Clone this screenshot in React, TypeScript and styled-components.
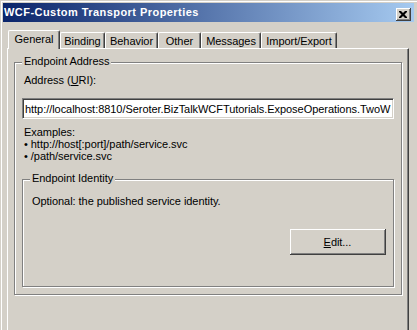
import React from "react";
import styled, { createGlobalStyle } from "styled-components";

const GlobalStyle = createGlobalStyle`
  html, body {
    margin: 0;
    padding: 0;
    background: #d4d0c8;
  }
  body {
    font-family: "Liberation Sans", Arial, sans-serif;
    font-size: 11px;
    letter-spacing: -0.05px;
    color: #000;
  }
  *, *::before, *::after { box-sizing: border-box; }
`;

const Window = styled.div`
  width: 417px;
  height: 330px;
  overflow: hidden;
  background: #d4d0c8;
  box-shadow: inset 1px 1px 0 #d4d0c8, inset 2px 2px 0 #ffffff;
  display: flex;
  flex-direction: column;
  padding-top: 3px;
`;

const TitleBar = styled.div`
  flex: none;
  margin: 0 3px;
  height: 19px;
  display: flex;
  align-items: flex-end;
  justify-content: space-between;
  padding: 0 3px 1px 1px;
  background: linear-gradient(to right, #0a246a, #a6caf0);
`;

const Title = styled.span`
  align-self: center;
  color: #fff;
  font-weight: bold;
  font-size: 11px;
  letter-spacing: 0.45px;
  white-space: nowrap;
`;

const CloseButton = styled.div`
  width: 15px;
  height: 13px;
  background: #d4d0c8;
  box-shadow: inset -1px -1px 0 #404040, inset 1px 1px 0 #ffffff,
    inset -2px -2px 0 #808080;
  display: flex;
  align-items: center;
  justify-content: center;
  padding: 0 1px 1px 0;
`;

const TabStrip = styled.div`
  flex: none;
  display: flex;
  align-items: flex-end;
  height: 18px;
  margin-top: 8px;
  padding-left: 8px;
`;

const Tab = styled.div<{ $active?: boolean; $w: number }>`
  position: relative;
  z-index: ${(p) => (p.$active ? 1 : 0)};
  width: ${(p) => p.$w}px;
  height: ${(p) => (p.$active ? 19 : 16)}px;
  margin-bottom: ${(p) => (p.$active ? -1 : 0)}px;
  background: #d4d0c8;
  border-top: 1px solid #ffffff;
  border-left: 1px solid #ffffff;
  border-right: 1px solid #404040;
  box-shadow: inset -1px 0 0 #808080;
  border-radius: 2px 2px 0 0;
  padding-top: 2px;
  line-height: 13px;
  text-align: center;
  white-space: nowrap;
`;

const Panel = styled.div`
  flex: 1;
  margin-left: 7px;
  width: 402px;
  border-top: 1px solid #ffffff;
  border-left: 1px solid #ffffff;
  border-right: 1px solid #404040;
  box-shadow: inset -1px 0 0 #808080;
  padding: 13px 6px 0 6px;
  display: flex;
  flex-direction: column;
`;

const Group = styled.div`
  position: relative;
  border: 1px solid #808080;
  box-shadow: 1px 1px 0 #ffffff, inset 1px 1px 0 #ffffff;
  display: flex;
  flex-direction: column;
`;

const AddressGroup = styled(Group)`
  padding: 11px 7px 7px 7px;
`;

const IdentityGroup = styled(Group)`
  margin-top: 17px;
  padding: 15px 7px 31px 7px;
`;

const GroupTitle = styled.span`
  position: absolute;
  top: -8px;
  left: 7px;
  padding: 0 2px;
  background: #d4d0c8;
  line-height: 13px;
  white-space: nowrap;
`;

const Label = styled.div`
  line-height: 13px;
  padding-left: 2px;
  white-space: nowrap;
`;

const AddressInput = styled.input`
  margin-top: 11px;
  height: 21px;
  width: 100%;
  background: #ffffff;
  border: 1px solid;
  border-color: #808080 #ffffff #ffffff #808080;
  box-shadow: inset 1px 1px 0 #404040, inset -1px -1px 0 #d4d0c8;
  padding: 0 2px;
  font: inherit;
  letter-spacing: inherit;
  color: #000;
  outline: none;
`;

const Examples = styled.div`
  margin-top: 7px;
  padding-left: 2px;
  line-height: 12px;
  white-space: nowrap;
`;

const Note = styled.div`
  line-height: 13px;
  padding-left: 2px;
  white-space: nowrap;
`;

const EditButton = styled.button`
  align-self: flex-end;
  margin-top: 21px;
  width: 96px;
  height: 26px;
  border: none;
  background: #d4d0c8;
  box-shadow: inset -1px -1px 0 #404040, inset 1px 1px 0 #ffffff,
    inset -2px -2px 0 #808080;
  font: inherit;
  letter-spacing: inherit;
  color: #000;
  padding: 0 1px 1px 0;
`;

const tabs = [
  { label: "General", w: 52, active: true },
  { label: "Binding", w: 45 },
  { label: "Behavior", w: 53 },
  { label: "Other", w: 43 },
  { label: "Messages", w: 60 },
  { label: "Import/Export", w: 76 },
];

export default function App() {
  return (
    <>
      <GlobalStyle />
      <Window>
        <TitleBar>
          <Title>WCF-Custom Transport Properties</Title>
          <CloseButton>
            <svg width="8" height="7" viewBox="0 0 8 7">
              <path
                d="M0 0h2l2 2 2-2h2v1L5.5 3.5 8 6v1H6L4 5 2 7H0V6l2.5-2.5L0 1z"
                fill="#000"
              />
            </svg>
          </CloseButton>
        </TitleBar>
        <TabStrip>
          {tabs.map((t) => (
            <Tab key={t.label} $w={t.w} $active={t.active}>
              {t.label}
            </Tab>
          ))}
        </TabStrip>
        <Panel>
          <AddressGroup>
            <GroupTitle>Endpoint Address</GroupTitle>
            <Label>
              Address (<u>U</u>RI):
            </Label>
            <AddressInput
              readOnly
              value="http://localhost:8810/Seroter.BizTalkWCFTutorials.ExposeOperations.TwoW"
            />
            <Examples>
              <div>Examples:</div>
              <div>• http://host[:port]/path/service.svc</div>
              <div>• /path/service.svc</div>
            </Examples>
            <IdentityGroup>
              <GroupTitle>Endpoint Identity</GroupTitle>
              <Note>Optional: the published service identity.</Note>
              <EditButton>
                <u>E</u>dit...
              </EditButton>
            </IdentityGroup>
          </AddressGroup>
        </Panel>
      </Window>
    </>
  );
}
